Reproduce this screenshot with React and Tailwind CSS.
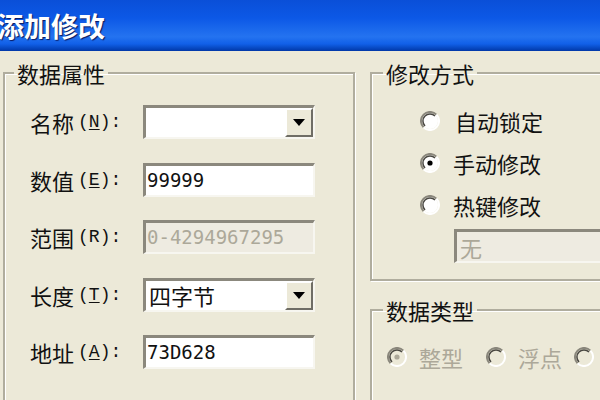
import React from 'react';

const cjk = "font-['Noto_Sans_CJK_SC',sans-serif]";

function Radio({ checked = false, disabled = false }) {
  return (
    <svg width="20" height="20" viewBox="0 0 20 20" className="shrink-0">
      <circle cx="10" cy="10" r="8" fill={disabled ? '#ece9d8' : '#ffffff'} />
      <path d="M16.4 3.6 A9 9 0 0 0 3.6 16.4" fill="none" stroke="#8a877c" strokeWidth="2" />
      <path d="M15 5 A7 7 0 0 0 5 15" fill="none" stroke="#4a4842" strokeWidth="1.5" />
      <path d="M16.4 3.6 A9 9 0 0 1 3.6 16.4" fill="none" stroke="#ffffff" strokeWidth="2" />
      {checked && <circle cx="10" cy="10" r="2.6" fill={disabled ? '#aca899' : '#000000'} />}
    </svg>
  );
}

function Label({ zh, k, u = true }) {
  return (
    <div className="flex w-[113px] shrink-0 items-center text-[22px] leading-[26px] text-[#111]">
      <span>{zh}</span>
      <span className="ml-[4px] font-['Liberation_Mono',monospace] text-[18px]">
        (<span className={u ? 'underline underline-offset-2' : ''}>{k}</span>):
      </span>
    </div>
  );
}

function Box({ children, disabled = false, combo = false, className = '' }) {
  return (
    <div
      className={`flex h-[34px] items-center border-b-2 border-l-[3px] border-r-2 border-t-[3px] border-b-[#f7f6f0] border-l-[#8b887d] border-r-[#f7f6f0] border-t-[#8b887d] ${
        disabled ? 'bg-[#eeebe1] text-[#aca899]' : 'bg-white text-[#111]'
      } ${className}`}
    >
      <div className="flex-1 overflow-hidden whitespace-nowrap pl-[1px]">{children}</div>
      {combo && (
        <div className="flex h-full w-[28px] items-center justify-center border-2 border-b-[#6f6d65] border-l-[#ffffff] border-r-[#6f6d65] border-t-[#ffffff] bg-[#ece9d8]">
          <svg width="12" height="7" viewBox="0 0 12 7">
            <path d="M0 0 H12 L6 7 Z" fill="#000" />
          </svg>
        </div>
      )}
    </div>
  );
}

const groupCls =
  'border-2 border-[#b0ad9e] shadow-[inset_1px_1px_0_#ffffff,1px_1px_0_#ffffff]';
const legendCls = 'px-[3px] text-[22px] leading-[26px] text-[#111]';

export default function App() {
  return (
    <div className={`flex h-[400px] w-[600px] flex-col overflow-hidden bg-[#ece9d8] ${cjk}`}>
      {/* Title bar */}
      <div className="flex h-[51px] shrink-0 items-center bg-[linear-gradient(to_bottom,#0a4fd8_0%,#0c58e6_35%,#2473f0_72%,#1160e8_86%,#0038a8_100%)]">
        <span className="ml-[-3px] text-[27px] font-bold leading-none text-white [text-shadow:1px_1px_1px_#0a1a60]">
          添加修改
        </span>
      </div>

      <div className="flex flex-1 gap-[15px] pl-[3px]">
        {/* 数据属性 */}
        <fieldset className={`mt-[9px] h-[400px] w-[352px] shrink-0 ${groupCls}`}>
          <legend className={`ml-[9px] ${legendCls}`}>数据属性</legend>
          <div className="flex flex-col gap-[23.5px] pl-[25px] pt-[19px]">
            <div className="flex h-[34px] items-center">
              <Label zh="名称" k="N" />
              <Box combo className="w-[172px]" />
            </div>
            <div className="flex h-[34px] items-center">
              <Label zh="数值" k="E" />
              <Box className="w-[172px]">
                <span className="font-['DejaVu_Sans_Mono',monospace] text-[19px]">99999</span>
              </Box>
            </div>
            <div className="flex h-[34px] items-center">
              <Label zh="范围" k="R" u={false} />
              <Box disabled className="w-[172px]">
                <span className="font-['DejaVu_Sans_Mono',monospace] text-[19px]">0-4294967295</span>
              </Box>
            </div>
            <div className="flex h-[34px] items-center">
              <Label zh="长度" k="T" />
              <Box combo className="w-[172px]">
                <span className="pl-[2px] text-[22px]">四字节</span>
              </Box>
            </div>
            <div className="flex h-[34px] items-center">
              <Label zh="地址" k="A" />
              <Box className="w-[172px]">
                <span className="font-['DejaVu_Sans_Mono',monospace] text-[19px]">73D628</span>
              </Box>
            </div>
          </div>
        </fieldset>

        <div className="flex w-[270px] shrink-0 flex-col">
          {/* 修改方式 */}
          <fieldset className={`mt-[9px] ${groupCls}`}>
            <legend className={`ml-[11px] ${legendCls}`}>修改方式</legend>
            <div className="flex flex-col pb-[16px] pl-[48px] pt-[22px] text-[22px] leading-[26px] text-[#111]">
              <div className="flex h-[26px] items-center gap-[15px]">
                <Radio />
                <span>自动锁定</span>
              </div>
              <div className="mt-[16px] flex h-[26px] items-center gap-[13px]">
                <Radio checked />
                <span>手动修改</span>
              </div>
              <div className="mt-[16px] flex h-[26px] items-center gap-[13px]">
                <Radio />
                <span>热键修改</span>
              </div>
              <Box disabled className="ml-[34px] mt-[11px] h-[32px]">
                <span className="pl-[2px] text-[22px]">无</span>
              </Box>
            </div>
          </fieldset>

          {/* 数据类型 */}
          <fieldset className={`mt-[16px] h-[200px] ${groupCls}`}>
            <legend className={`ml-[11px] ${legendCls}`}>数据类型</legend>
            <div className="flex items-center pl-[15px] pt-[21px] text-[22px] leading-[26px] text-[#aca899]">
              <Radio checked disabled />
              <span className="ml-[12px]">整型</span>
              <span className="ml-[23px]">
                <Radio disabled />
              </span>
              <span className="ml-[12px]">浮点</span>
              <span className="ml-[12px]">
                <Radio disabled />
              </span>
            </div>
          </fieldset>
        </div>
      </div>
    </div>
  );
}
